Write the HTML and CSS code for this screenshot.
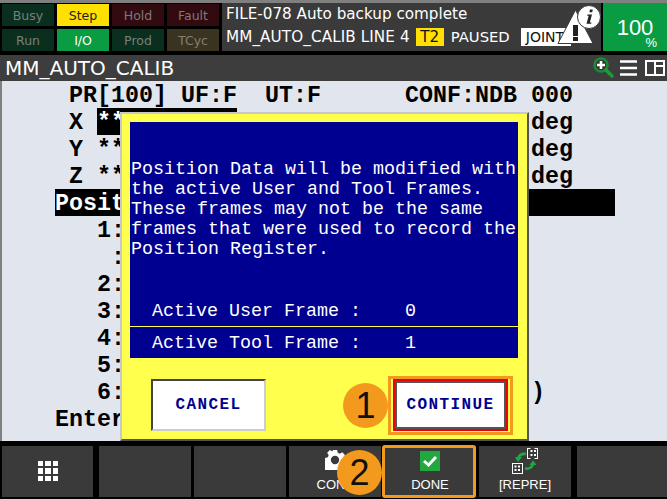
FILE: index.html
```html
<!DOCTYPE html>
<html lang="en">
<head>
<meta charset="utf-8">
<title>MM_AUTO_CALIB</title>
<link rel="stylesheet" href="styles.css">
</head>
<body>
<div class="app">
  <header class="status">
    <div class="leds">
      <div class="led led-green">Busy</div>
      <div class="led led-yellow">Step</div>
      <div class="led led-red">Hold</div>
      <div class="led led-red">Fault</div>
      <div class="led led-green">Run</div>
      <div class="led led-on">I/O</div>
      <div class="led led-green">Prod</div>
      <div class="led led-brown">TCyc</div>
    </div>
    <div class="message">
      <div class="msg-line">FILE-078 Auto backup complete</div>
      <div class="msg-line"><span class="msg-prog">MM_AUTO_CALIB LINE 4</span><span class="t2">T2</span><span class="paused">PAUSED</span><span class="joint">JOINT</span></div>
      <svg class="alert" viewBox="555 3 46 42">
        <path d="M575.500 10 L593 43.500 H558 Z" fill="#fff" stroke="#3a3a3a" stroke-width="1"/>
        <rect x="573" y="25" width="5" height="11" fill="#222"/>
        <rect x="573" y="37" width="5" height="4" fill="#222"/>
        <circle cx="589" cy="17" r="11.500" fill="#fff" stroke="#3a3a3a" stroke-width="1"/>
        <path d="M590 9.500h2.800l-.6 2.800h-2.800z M587.500 14.500h4.500l-2.200 8h1.700l-.3 1.200h-4.700l2.200-8h-1.500z" fill="#222"/>
      </svg>
    </div>
    <div class="override"><span class="ov-num">100</span><span class="ov-pct">%</span></div>
  </header>
  <div class="titlebar">
    <span class="title">MM_AUTO_CALIB</span>
    <div class="tools">
      <svg class="ico-zoom" viewBox="0 0 22 22">
        <circle cx="8" cy="8" r="6.500" fill="#333" stroke="#1b8a35" stroke-width="2.600"/>
        <path d="M8 4v8M4 8h8" stroke="#fff" stroke-width="2.600"/>
        <path d="M13 13l6 6" stroke="#1f9a3c" stroke-width="3.400" stroke-linecap="round"/>
      </svg>
      <svg class="ico-menu" viewBox="0 0 17 16">
        <path d="M0 1.500h17M0 8h17M0 14.500h17" stroke="#fff" stroke-width="2.600"/>
      </svg>
      <svg class="ico-split" viewBox="0 0 20 16">
        <path d="M1 1h18v14H1z M10 1v14 M10 6h9" fill="none" stroke="#fff" stroke-width="2"/>
      </svg>
    </div>
  </div>
  <main class="screen">
<div class="row">PR[100] UF:F  UT:F      CONF:NDB 000</div>
<div class="row"><span>X </span><span class="sel">**</span><span class="col-deg">deg</span></div>
<div class="row"><span>Y </span><span class="val">**</span><span class="col-deg">deg</span></div>
<div class="row"><span>Z </span><span class="val">**</span><span class="col-deg">deg</span></div>
<div class="row row-bar">Posit</div>
<div class="row row-n">1:</div>
<div class="row row-c">:</div>
<div class="row row-n">2:</div>
<div class="row row-n">3:</div>
<div class="row row-n">4:</div>
<div class="row row-n">5:</div>
<div class="row row-n">6:<span class="col-deg">)</span></div>
<div class="row row-e">Enter</div>
  </main>
  <nav class="softkeys">
    <div class="key key-menu">
      <svg class="ico-grid" viewBox="0 0 20 20">
        <path d="M0 0h5v5H0zM7 0h6v5H7zM15 0h5v5h-5zM0 7h5v6H0zM7 7h6v6H7zM15 7h5v6h-5zM0 15h5v5H0zM7 15h6v5H7zM15 15h5v5h-5z" fill="#fff"/>
      </svg>
    </div>
    <div class="key"></div>
    <div class="key"></div>
    <div class="key">
      <svg class="ico-key ico-gear" viewBox="0 0 24 24">
        <path d="M9.500 0h5l.8 3.400 2.400 1 3-1.800 3.300 3.300-1.800 3 1 2.400 .8.200v5l-3.400.8-1 2.400 1.800 3-3.300 3.300-3-1.800-2.400 1-.8 3.800h-5l-.8-3.800-2.400-1-3 1.800-3.300-3.300 1.800-3-1-2.400L0 14.500v-5l3.400-.8 1-2.400-1.800-3L5.900 0l3 1.800z" fill="#fff"/>
        <circle cx="12" cy="12" r="5" fill="#3a3a3a"/>
      </svg>
      <span class="key-label">CONF</span>
    </div>
    <div class="key key-done">
      <svg class="ico-key" viewBox="0 0 20 20">
        <rect width="20" height="20" fill="#22a83f"/>
        <path d="M4 10l4.500 4 7.500-8" fill="none" stroke="#fff" stroke-width="3"/>
      </svg>
      <span class="key-label">DONE</span>
    </div>
    <div class="key">
      <svg class="ico-repre" viewBox="0 0 28 28">
        <g fill="none" stroke="#fff" stroke-width="1">
          <path d="M16.500 2v11M26.500 2v11"/>
          <path d="M16.500 2.500h3M23.500 2.500h3M16.500 12.500h3M23.500 12.500h3"/>
          <path d="M19.500 4h2v2h-2zM23 4h2v2h-2zM19.500 8h2v2h-2zM23 8h2v2h-2z" fill="#fff" stroke="none"/>
          <path d="M1.500 17v11M11.500 17v11M1.500 17.500h10M1.500 27.500h10"/>
          <path d="M3.500 19.500h2v2h-2zM7 19.500h2v2H7zM3.500 23h2v2h-2zM7 23h2v2H7z" fill="#fff" stroke="none"/>
        </g>
        <path d="M15 8 C11 7.500 8.500 8.500 7.500 12" fill="none" stroke="#22a83f" stroke-width="2.600"/>
        <path d="M4 11 H11 L7 16 Z" fill="#22a83f"/>
        <path d="M14 22.500 C18 23 21 21.500 22 18" fill="none" stroke="#22a83f" stroke-width="2.600"/>
        <path d="M18.500 19 H25.500 L22 14.500 Z" fill="#22a83f"/>
      </svg>
      <span class="key-label">[REPRE]</span>
    </div>
    <div class="key"></div>
  </nav>

  <section class="dialog">
    <div class="dialog-panel">
      <div class="dialog-text">Position Data will be modified with
the active User and Tool Frames.
These frames may not be the same
frames that were used to record the
Position Register.</div>
      <div class="frame-row frame-user">Active User Frame :    0</div>
      <div class="frame-row frame-tool">Active Tool Frame :    1</div>
    </div>
    <div class="dialog-actions">
      <button class="btn" type="button">CANCEL</button>
      <button class="btn btn-focus" type="button">CONTINUE</button>
    </div>
  </section>

  <div class="mark mark-continue"></div>
  <div class="mark mark-done"></div>
  <div class="badge badge-1">1</div>
  <div class="badge badge-2">2</div>
</div>
</body>
</html>
```
FILE: styles.css
```css
* { box-sizing: border-box; }
html, body { margin: 0; padding: 0; }
body { background: #000; font-family: "Liberation Sans", Arial, sans-serif; overflow: hidden; }
.app { position: relative; width: 667px; height: 499px; display: flex; flex-direction: column; background: #000; }

.status { height: 55px; flex: none; display: flex; border-top: 3px solid #808080; background: #000; }
.leds { width: 222px; padding: 1px 0 0 2px; display: grid; grid-template-columns: repeat(4, 52px); grid-template-rows: repeat(2, 22px); column-gap: 3px; row-gap: 3px; flex: none; }
.led { display: flex; align-items: center; justify-content: center; font-family: "DejaVu Sans", sans-serif; font-size: 12.500px; }
.led-green { background: #0b2f1e; color: #77807b; }
.led-red { background: #310b10; color: #80787a; }
.led-brown { background: #3a3320; color: #827e74; }
.led-yellow { background: #ffe000; color: #222; }
.led-on { background: #0a9c43; color: #fff; }

.message { position: relative; width: 379px; height: 48px; flex: none; background: #3a3a3a; color: #fff; padding: 0 0 0 4px; font-family: "DejaVu Sans", sans-serif; font-size: 15.200px; }
.msg-line { height: 22px; line-height: 22px; white-space: nowrap; display: flex; align-items: center; }
.msg-line + .msg-line { margin-top: 1px; }
.msg-prog { letter-spacing: .1px; }
.t2 { background: #ffe000; color: #111; width: 28px; height: 18px; line-height: 18px; text-align: center; margin-left: 6px; flex: none; }
.paused { margin-left: 7px; font-size: 14.800px; }
.joint { background: #fff; color: #111; width: 50px; height: 18px; line-height: 18px; margin-left: 11px; overflow: hidden; padding-left: 5px; font-size: 14px; flex: none; }
.alert { position: absolute; right: 0; top: 0; width: 46px; height: 42px; }

.override { width: 64px; height: 48px; margin-left: 2px; flex: none; background: #0a9c43; color: #fff; position: relative; display: flex; align-items: center; justify-content: center; font-family: "Liberation Sans", sans-serif; }
.ov-num { font-size: 22px; line-height: 17px; margin-top: 1px; }
.ov-pct { position: absolute; right: 10px; bottom: 3px; font-size: 13px; line-height: 11px; }

.titlebar { height: 26px; flex: none; background: #3c3d3c; color: #fff; display: flex; align-items: center; justify-content: space-between; padding: 0 2px 0 5px; }
.title { font-family: "DejaVu Sans", sans-serif; font-size: 20px; }
.tools { display: flex; align-items: center; gap: 8px; }
.ico-zoom { width: 22px; height: 22px; margin-right: -3px; }
.ico-menu { width: 17px; height: 16px; }
.ico-split { width: 20px; height: 16px; }

.screen { height: 360px; flex: none; background: #e1e5ee; border-left: 2px solid #808080; padding-left: 53px; font-family: "Liberation Mono", monospace; font-size: 23.330px; color: #000; }
.row { height: 27px; line-height: 31px; white-space: pre; position: relative; padding-left: 14px; font-weight: 700; }
.sel, .val { display: inline-block; width: 140px; height: 27px; vertical-align: top; }
.sel { background: #000; color: #fff; }
.col-deg { position: absolute; left: 476px; top: 0; }
.row-bar { background: #000; color: #fff; width: 560px; padding-left: 0; }
.row-n { padding-left: 42px; }
.row-c { padding-left: 56px; }
.row-e { padding-left: 0; }

.softkeys { flex: 1; display: flex; padding: 5px 0 2px 0; background: #000; }
.key { width: 92px; margin-left: 3px; background: #3a3a3a; color: #fff; display: flex; flex-direction: column; align-items: center; justify-content: flex-end; font-size: 13px; padding-bottom: 4px; position: relative; }
.key-menu { margin-left: 2px; width: 91px; justify-content: center; padding-bottom: 2px; }
.key:nth-child(2) { margin-left: 6px; }
.key:last-child { margin-left: 6px; width: 90px; }
.key-label { font-family: "Liberation Sans", sans-serif; height: 16px; line-height: 16px; }
.ico-grid { width: 20px; height: 20px; }
.ico-key { width: 20px; height: 20px; margin-bottom: 6px; }
.ico-gear { margin-bottom: 7px; }
.ico-repre { width: 28px; height: 28px; margin-bottom: 3px; }

.dialog { position: absolute; left: 120px; top: 112px; width: 409px; height: 329px; background: #ffff4d; border-style: solid; border-width: 2px; border-color: #c8c8c8 #555 #555 #c8c8c8; padding: 8px 9px 0 8px; }
.dialog-panel { height: 236px; background: #000090; color: #fff; font-family: "Liberation Mono", monospace; font-size: 18.330px; padding-left: 1px; position: relative; }
.dialog-text { padding-top: 38px; line-height: 20px; white-space: pre; }
.frame-row { position: absolute; left: 0; right: 0; white-space: pre; padding-left: 22px; line-height: 20px; }
.frame-user { top: 178px; height: 27px; line-height: 24px; border-bottom: 1px solid #ffff4d; }
.frame-tool { top: 212px; }
.dialog-actions { display: flex; padding: 21px 0 0 21px; gap: 127px; }
.btn { width: 115px; height: 52px; background: #fff; border-style: solid; border-width: 2px; border-color: #444 #ccc #ccc #444; color: #000090; font-family: "Liberation Mono", monospace; font-weight: 700; font-size: 16px; letter-spacing: 1.400px; padding: 0; }
.btn-focus { border-color: #e00; box-shadow: inset 2px 2px 0 #555, inset -2px -2px 0 #555; }

.mark { position: absolute; border: 3px solid #f39a1e; }
.mark-continue { left: 388px; top: 376px; width: 125px; height: 59px; }
.mark-done { left: 382px; top: 445px; width: 94px; height: 53px; border-radius: 3px; }
.badge { position: absolute; width: 45px; height: 45px; border-radius: 50%; background: #f39a1e; color: #111; font-family: "Liberation Sans", sans-serif; font-size: 36px; display: flex; align-items: center; justify-content: center; }
.badge-1 { left: 343px; top: 383px; }
.badge-2 { left: 337px; top: 450px; }
```
